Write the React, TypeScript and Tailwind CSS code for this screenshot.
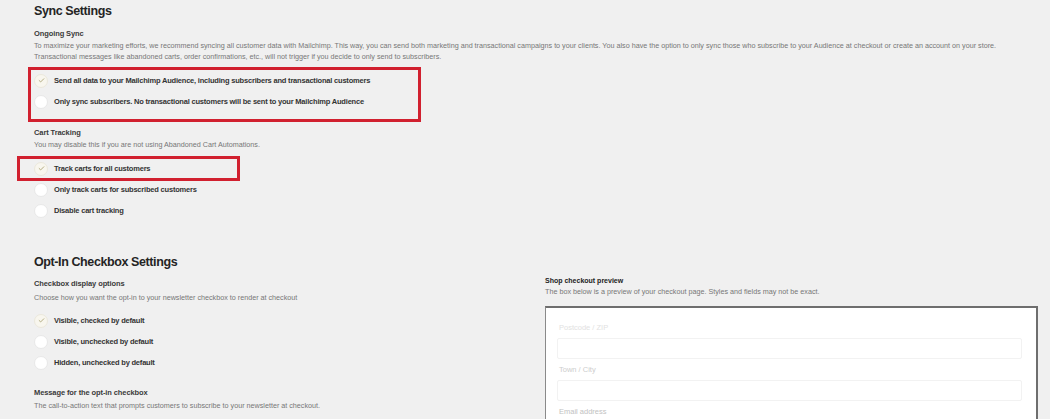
import { Check } from 'lucide-react'

type Option = { label: string; checked?: boolean }

function Radio({ label, checked }: Option) {
  return (
    <div className="flex h-[21px] items-center gap-[6px]">
      <span
        className={
          checked
            ? 'flex h-[14px] w-[14px] items-center justify-center rounded-full border border-[#ebe8dc] bg-[#f8f6ee]'
            : 'h-[14px] w-[14px] rounded-full border border-[#e8e8e8] bg-white'
        }
      >
        {checked && <Check size={7} strokeWidth={3} className="text-[#a9a273]" />}
      </span>
      <span className="text-[7.5px] font-bold tracking-[-0.2px] text-[#333]">{label}</span>
    </div>
  )
}

function Title({ children, className = '' }: { children: React.ReactNode; className?: string }) {
  return (
    <div className={`h-[11px] text-[7.5px] font-bold leading-[11px] tracking-[-0.1px] text-[#3a3a3a] ${className}`}>
      {children}
    </div>
  )
}

function Desc({ children, className = '' }: { children: React.ReactNode; className?: string }) {
  return <p className={`text-[7.2px] leading-[11px] text-[#777] ${className}`}>{children}</p>
}

function Field({ label, tone }: { label: string; tone: string }) {
  return (
    <div>
      <div className={`h-[11px] pl-[2px] text-[7.5px] leading-[11px] ${tone}`}>{label}</div>
      <div className="mt-[5px] h-[21px] rounded-[2px] border border-[#f2f2f2] bg-white" />
    </div>
  )
}

export default function App() {
  return (
    <div
      className="h-[419px] w-[1050px] overflow-hidden bg-[#f0f0f0] pl-[34px]"
      style={{ fontFamily: '"Liberation Sans", Arial, sans-serif' }}
    >
      {/* Sync settings */}
      <h1 className="mt-[2px] h-[18px] text-[12.5px] font-bold leading-[18px] tracking-[-0.4px] text-[#242424]">
        Sync Settings
      </h1>

      <Title className="mt-[8px]">Ongoing Sync</Title>
      <Desc className="mt-[1px] w-[990px]">
        To maximize your marketing efforts, we recommend syncing all customer data with Mailchimp. This way, you can send
        both marketing and transactional campaigns to your clients. You also have the option to only sync those who
        subscribe to your Audience at checkout or create an account on your store. Transactional messages like abandoned
        carts, order confirmations, etc., will not trigger if you decide to only send to subscribers.
      </Desc>

      <div className="relative mt-[8px]">
        <Radio label="Send all data to your Mailchimp Audience, including subscribers and transactional customers" checked />
        <Radio label="Only sync subscribers. No transactional customers will be sent to your Mailchimp Audience" />
        <div className="pointer-events-none absolute -left-[6px] -top-[3px] h-[55px] w-[393px] border-[3px] border-[#d1202f]" />
      </div>

      <Title className="mt-[15px]">Cart Tracking</Title>
      <Desc className="mt-[1px]">You may disable this if you are not using Abandoned Cart Automations.</Desc>

      <div className="relative mt-[8px]">
        <Radio label="Track carts for all customers" checked />
        <Radio label="Only track carts for subscribed customers" />
        <Radio label="Disable cart tracking" />
        <div className="pointer-events-none absolute -left-[17px] -top-[2px] h-[25px] w-[223px] border-[3px] border-[#d1202f]" />
      </div>

      {/* Opt-in settings */}
      <h2 className="mt-[32px] h-[18px] text-[12.5px] font-bold leading-[18px] tracking-[-0.4px] text-[#242424]">
        Opt-In Checkbox Settings
      </h2>

      <div className="grid grid-cols-[511px_493px]">
        <div>
          <Title className="mt-[7px]">Checkbox display options</Title>
          <Desc className="mt-[3px]">Choose how you want the opt-in to your newsletter checkbox to render at checkout</Desc>
          <div className="mt-[7px]">
            <Radio label="Visible, checked by default" checked />
            <Radio label="Visible, unchecked by default" />
            <Radio label="Hidden, unchecked by default" />
          </div>
          <Title className="mt-[14px]">Message for the opt-in checkbox</Title>
          <Desc className="mt-[2px]">
            The call-to-action text that prompts customers to subscribe to your newsletter at checkout.
          </Desc>
        </div>

        <div>
          <div className="mt-[5px] h-[10px] text-[7px] font-bold leading-[10px] text-[#222]">Shop checkout preview</div>
          <Desc className="text-[#555]">The box below is a preview of your checkout page. Styles and fields may not be exact.</Desc>
          <div className="mt-[9px] h-[200px] border-2 border-l-[1.5px] border-[#6e6e6e] border-l-[#8a8a8a] bg-white px-[11px] pt-[14px]">
            <div className="flex w-[465px] flex-col gap-[5px]">
              <Field label="Postcode / ZIP" tone="text-[#e2e2e2]" />
              <Field label="Town / City" tone="text-[#cdcdcd]" />
              <Field label="Email address" tone="text-[#c2c2c2]" />
            </div>
          </div>
        </div>
      </div>
    </div>
  )
}
